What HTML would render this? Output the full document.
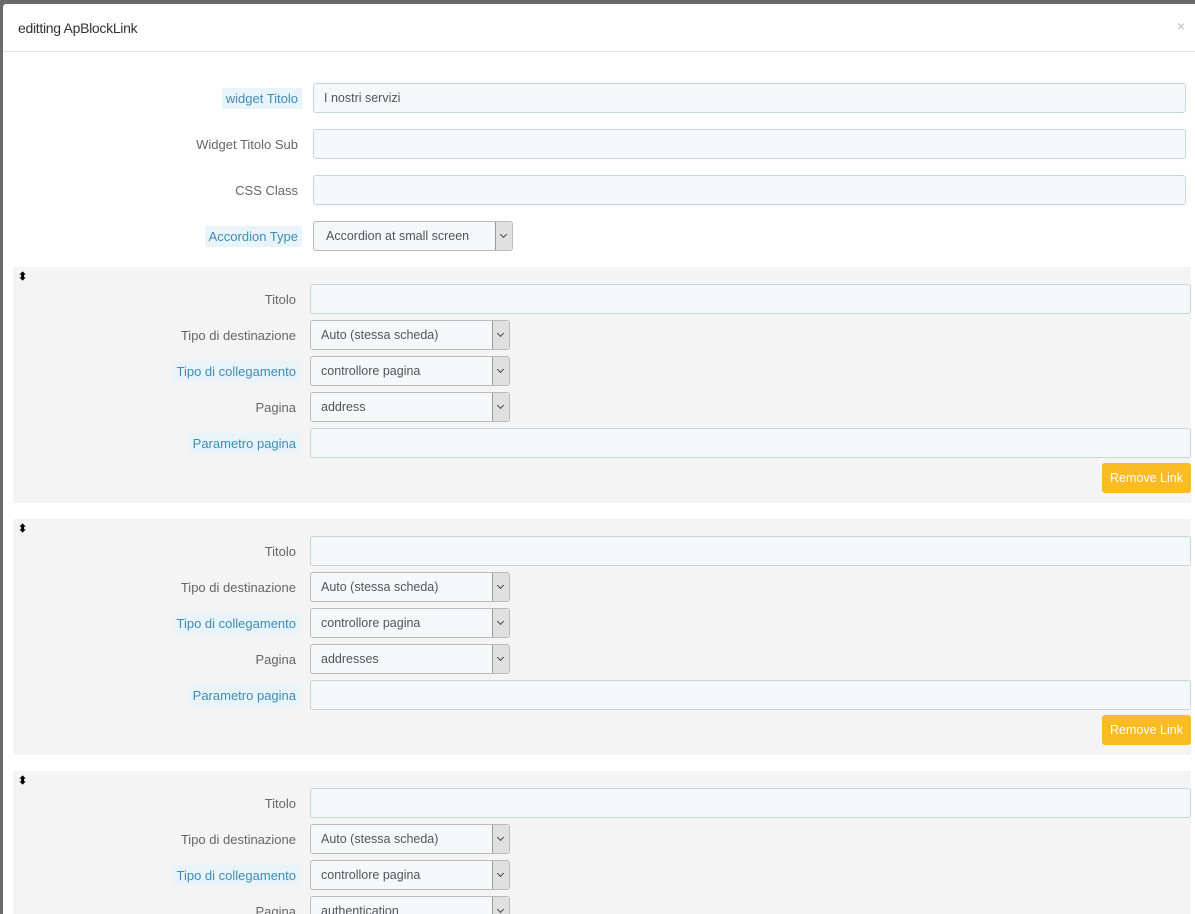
<!DOCTYPE html>
<html style="height:914px;overflow:hidden;"><head><style>
body{margin:0;width:1195px;height:914px;overflow:hidden;background:#6b6b6b;font-family:"Liberation Sans",sans-serif;font-size:13px;color:#555;position:relative;}
.modal{position:absolute;left:3px;top:4px;width:1192px;height:910px;background:#fff;border-radius:3px 0 0 0;overflow:hidden;}
.hdr{height:47px;border-bottom:1px solid #e5e5e5;position:relative;}
.hdr h4{margin:0;position:absolute;left:15px;top:16px;font-size:14px;font-weight:normal;color:#333;letter-spacing:-0.3px;}
.x{position:absolute;right:10px;top:14px;color:#bbb;font-size:14px;}
.lab{position:absolute;text-align:right;line-height:32px;white-space:nowrap;color:#666;}
.lab span{padding:3px 4px;}
.hl span{background:#e8f4fa;color:#3d8db5;}
.inp{position:absolute;height:28px;border:1px solid #c7d6db;background:#f5f8f9;border-radius:3px;line-height:29px;padding-left:10px;box-sizing:content-box;color:#555;font-size:12.5px;}
.sel{border-color:#bbb;}
.sel .ar{position:absolute;right:0;top:0;width:16px;height:28px;background:#e0e0e0;border-left:1px solid #999;border-radius:0 3px 3px 0;}
.sel .ar:after{content:"";position:absolute;left:5px;top:10px;width:4px;height:4px;border-right:1px solid #444;border-bottom:1px solid #444;transform:rotate(45deg);}
.panel{position:absolute;left:10px;width:1178px;height:236px;background:#f4f4f4;}
.h{position:absolute;left:5px;top:3px;font-size:11px;color:#000;font-weight:bold;}
.btn{position:absolute;left:1089px;top:196px;width:89px;height:30px;background:#fbbb22;border-radius:3px;color:#fff;line-height:30px;text-align:center;font-size:12.5px;}
</style></head><body>
<div class="modal">
<div class="hdr"><h4>editting ApBlockLink</h4><span class="x">×</span></div>

<div class="lab hl" style="right:893px;top:79px;"><span>widget Titolo</span></div>
<div class="inp" style="left:310px;top:79px;width:861px;">I nostri servizi</div>
<div class="lab" style="right:893px;top:125px;"><span>Widget Titolo Sub</span></div>
<div class="inp" style="left:310px;top:125px;width:861px;"></div>
<div class="lab" style="right:893px;top:171px;"><span>CSS Class</span></div>
<div class="inp" style="left:310px;top:171px;width:861px;"></div>
<div class="lab hl" style="right:893px;top:217px;"><span>Accordion Type</span></div>
<div class="inp sel" style="left:310px;top:217px;width:186px;padding-left:12px;">Accordion at small screen<div class="ar"></div></div>

<div class="panel" style="top:263px;">
<div class="h">⬍</div>
<div class="lab" style="right:891px;top:17px;"><span>Titolo</span></div>
<div class="inp" style="left:297px;top:17px;width:869px;"></div>
<div class="lab" style="right:891px;top:53px;"><span>Tipo di destinazione</span></div>
<div class="inp sel" style="left:297px;top:53px;width:188px;">Auto (stessa scheda)<div class="ar"></div></div>
<div class="lab hl" style="right:891px;top:89px;"><span>Tipo di collegamento</span></div>
<div class="inp sel" style="left:297px;top:89px;width:188px;">controllore pagina<div class="ar"></div></div>
<div class="lab" style="right:891px;top:125px;"><span>Pagina</span></div>
<div class="inp sel" style="left:297px;top:125px;width:188px;">address<div class="ar"></div></div>
<div class="lab hl" style="right:891px;top:161px;"><span>Parametro pagina</span></div>
<div class="inp" style="left:297px;top:161px;width:869px;"></div>
<div class="btn">Remove Link</div>
</div>

<div class="panel" style="top:515px;">
<div class="h">⬍</div>
<div class="lab" style="right:891px;top:17px;"><span>Titolo</span></div>
<div class="inp" style="left:297px;top:17px;width:869px;"></div>
<div class="lab" style="right:891px;top:53px;"><span>Tipo di destinazione</span></div>
<div class="inp sel" style="left:297px;top:53px;width:188px;">Auto (stessa scheda)<div class="ar"></div></div>
<div class="lab hl" style="right:891px;top:89px;"><span>Tipo di collegamento</span></div>
<div class="inp sel" style="left:297px;top:89px;width:188px;">controllore pagina<div class="ar"></div></div>
<div class="lab" style="right:891px;top:125px;"><span>Pagina</span></div>
<div class="inp sel" style="left:297px;top:125px;width:188px;">addresses<div class="ar"></div></div>
<div class="lab hl" style="right:891px;top:161px;"><span>Parametro pagina</span></div>
<div class="inp" style="left:297px;top:161px;width:869px;"></div>
<div class="btn">Remove Link</div>
</div>

<div class="panel" style="top:767px;">
<div class="h">⬍</div>
<div class="lab" style="right:891px;top:17px;"><span>Titolo</span></div>
<div class="inp" style="left:297px;top:17px;width:869px;"></div>
<div class="lab" style="right:891px;top:53px;"><span>Tipo di destinazione</span></div>
<div class="inp sel" style="left:297px;top:53px;width:188px;">Auto (stessa scheda)<div class="ar"></div></div>
<div class="lab hl" style="right:891px;top:89px;"><span>Tipo di collegamento</span></div>
<div class="inp sel" style="left:297px;top:89px;width:188px;">controllore pagina<div class="ar"></div></div>
<div class="lab" style="right:891px;top:125px;"><span>Pagina</span></div>
<div class="inp sel" style="left:297px;top:125px;width:188px;">authentication<div class="ar"></div></div>
</div>
</div>
</body></html>
